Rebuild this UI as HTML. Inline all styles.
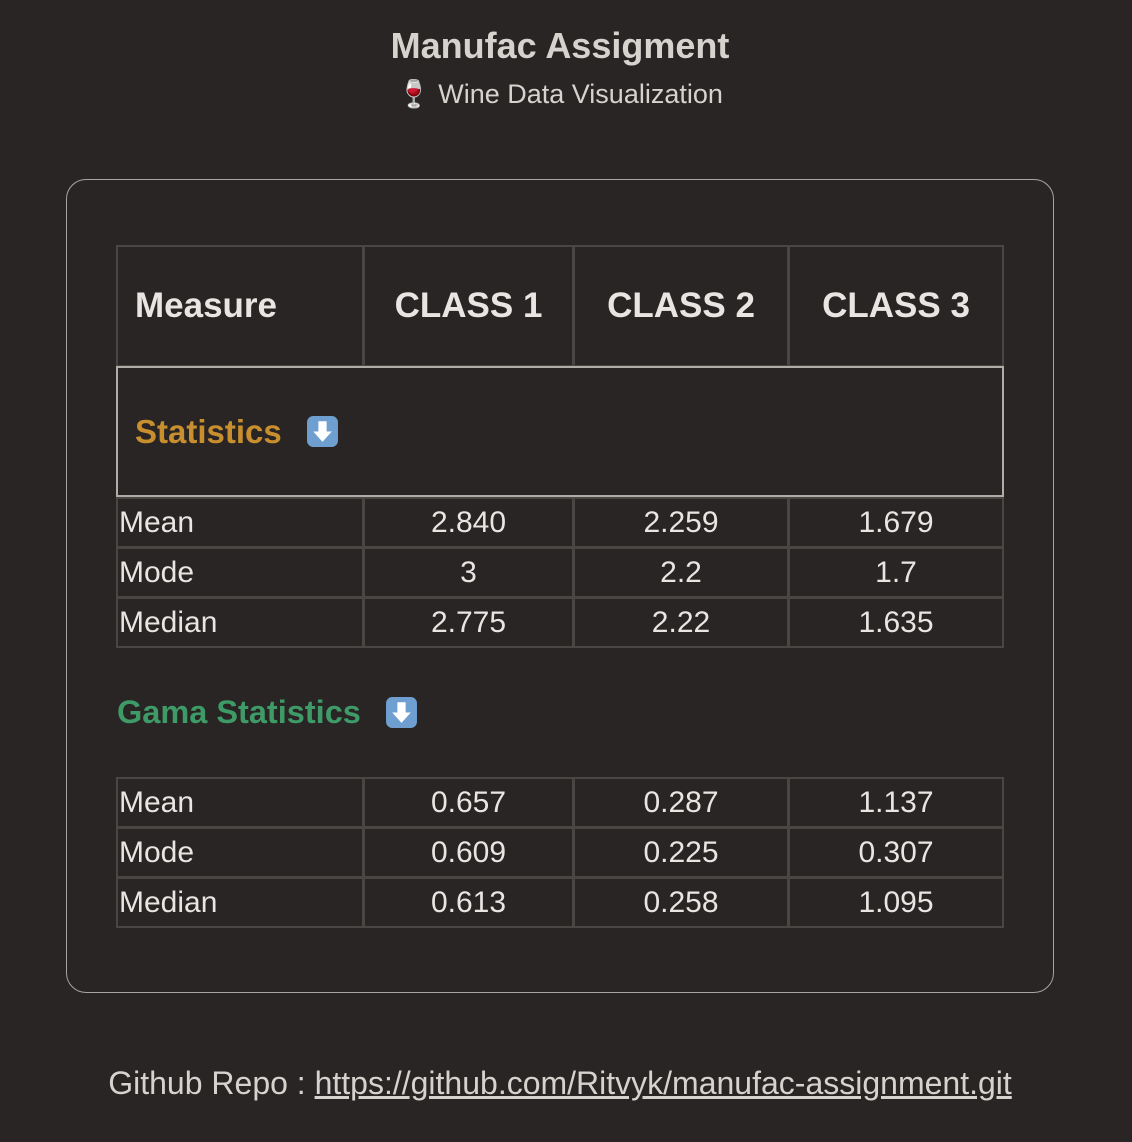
<!DOCTYPE html>
<html><head><meta charset="utf-8"><style>
body{margin:0;width:1132px;height:1142px;background:#282524;font-family:"Liberation Sans",sans-serif;color:#e8e6e3;position:relative;overflow:hidden}
.a{position:absolute}
.t{left:0;width:1132px;text-align:center}
.card{left:66px;top:179px;width:986px;height:812px;border:1.5px solid #a8a5a0;border-radius:20px}
.c{position:absolute;box-sizing:border-box;border:2px solid #4a4643;display:flex;align-items:center;justify-content:center;font-size:30px}
.h{font-weight:bold;font-size:35px}
.l{justify-content:flex-start;padding-left:1px}
</style></head><body>
<div class="a t" style="top:25px;font-size:36px;font-weight:bold;color:#d6d3cf;left:-6px">Manufac Assigment</div>
<div class="a t" style="top:78px;font-size:27px;color:#d6d3cf;left:-6px"><span style="color:#b3262d">🍷</span> Wine Data Visualization</div>
<div class="a card"></div>

<div class="c h l" style="left:116px;top:245px;width:248px;height:122px;padding-left:17px">Measure</div>
<div class="c h" style="left:363px;top:245px;width:211px;height:122px">CLASS 1</div>
<div class="c h" style="left:573px;top:245px;width:216px;height:122px">CLASS 2</div>
<div class="c h" style="left:788px;top:245px;width:216px;height:122px">CLASS 3</div>
<div class="c l" style="left:116px;top:366px;width:888px;height:131px;border-color:#b0ada8;padding-left:17px;font-weight:bold;font-size:33px;color:#c98f2e">Statistics
<svg width="33" height="33" viewBox="0 0 32 32" style="margin-left:24px"><rect x="1" y="1" width="30" height="30" rx="6" fill="#6f9fd1"/><path d="M12 6h8v10h5l-9 10-9-10h5z" fill="#fff"/></svg></div>

<div class="c l" style="left:116px;top:497px;width:248px;height:51px">Mean</div>
<div class="c" style="left:363px;top:497px;width:211px;height:51px">2.840</div>
<div class="c" style="left:573px;top:497px;width:216px;height:51px">2.259</div>
<div class="c" style="left:788px;top:497px;width:216px;height:51px">1.679</div>
<div class="c l" style="left:116px;top:547px;width:248px;height:51px">Mode</div>
<div class="c" style="left:363px;top:547px;width:211px;height:51px">3</div>
<div class="c" style="left:573px;top:547px;width:216px;height:51px">2.2</div>
<div class="c" style="left:788px;top:547px;width:216px;height:51px">1.7</div>
<div class="c l" style="left:116px;top:597px;width:248px;height:51px">Median</div>
<div class="c" style="left:363px;top:597px;width:211px;height:51px">2.775</div>
<div class="c" style="left:573px;top:597px;width:216px;height:51px">2.22</div>
<div class="c" style="left:788px;top:597px;width:216px;height:51px">1.635</div>

<div class="a" style="left:117px;top:694px;font-size:32.5px;font-weight:bold;color:#3e9a66;display:flex;align-items:center">Gama Statistics
<svg width="33" height="33" viewBox="0 0 32 32" style="margin-left:24px"><rect x="1" y="1" width="30" height="30" rx="6" fill="#6f9fd1"/><path d="M12 6h8v10h5l-9 10-9-10h5z" fill="#fff"/></svg></div>

<div class="c l" style="left:116px;top:777px;width:248px;height:51px">Mean</div>
<div class="c" style="left:363px;top:777px;width:211px;height:51px">0.657</div>
<div class="c" style="left:573px;top:777px;width:216px;height:51px">0.287</div>
<div class="c" style="left:788px;top:777px;width:216px;height:51px">1.137</div>
<div class="c l" style="left:116px;top:827px;width:248px;height:51px">Mode</div>
<div class="c" style="left:363px;top:827px;width:211px;height:51px">0.609</div>
<div class="c" style="left:573px;top:827px;width:216px;height:51px">0.225</div>
<div class="c" style="left:788px;top:827px;width:216px;height:51px">0.307</div>
<div class="c l" style="left:116px;top:877px;width:248px;height:51px">Median</div>
<div class="c" style="left:363px;top:877px;width:211px;height:51px">0.613</div>
<div class="c" style="left:573px;top:877px;width:216px;height:51px">0.258</div>
<div class="c" style="left:788px;top:877px;width:216px;height:51px">1.095</div>

<div class="a t" style="top:1065px;font-size:32px;color:#d6d3cf;left:-6px">Github Repo : <span style="text-decoration:underline">https://github.com/Ritvyk/manufac-assignment.git</span></div>
</body></html>
